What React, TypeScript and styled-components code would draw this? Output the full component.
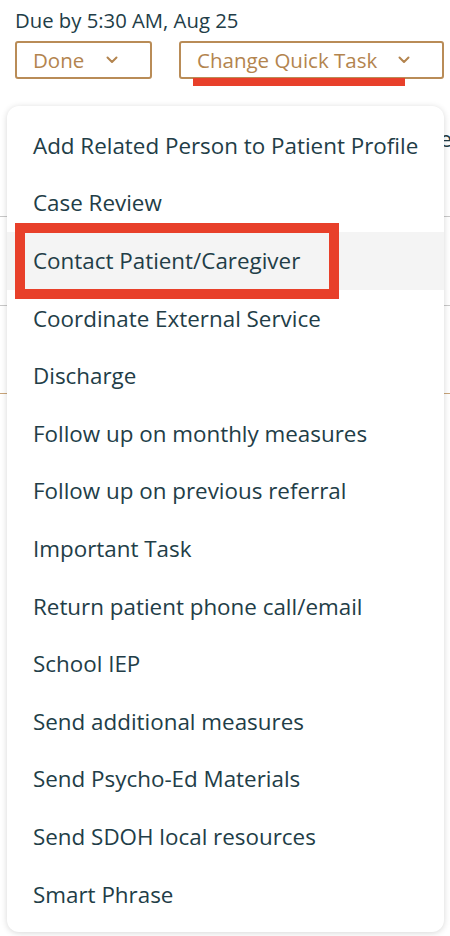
import styled, { createGlobalStyle } from 'styled-components';

const GlobalStyle = createGlobalStyle`
  body {
    margin: 0;
    background: #ffffff;
    font-family: 'Open Sans', 'Noto Sans', sans-serif;
  }
`;

const TASKS = [
  'Add Related Person to Patient Profile',
  'Case Review',
  'Contact Patient/Caregiver',
  'Coordinate External Service',
  'Discharge',
  'Follow up on monthly measures',
  'Follow up on previous referral',
  'Important Task',
  'Return patient phone call/email',
  'School IEP',
  'Send additional measures',
  'Send Psycho-Ed Materials',
  'Send SDOH local resources',
  'Smart Phrase',
];

const Chevron = () => (
  <svg width="12" height="8" viewBox="0 0 12 8" fill="none">
    <path d="M1.5 1.5 6 6l4.5-4.5" stroke="currentColor" strokeWidth="2" strokeLinecap="round" strokeLinejoin="round" />
  </svg>
);

const App = () => {
  return (
    <Page>
      <GlobalStyle />
      <DueText>Due by 5:30 AM, Aug 25</DueText>
      <ButtonRow>
        <SelectButton $width={137}>
          Done
          <Chevron />
        </SelectButton>
        <SelectButton $width={265} $marked>
          Change Quick Task
          <Chevron />
        </SelectButton>
      </ButtonRow>

      <Behind>
        <BehindRow $height={118} $line="#c8c8c8">
          <BehindText>Due date</BehindText>
        </BehindRow>
        <BehindRow $height={88} $line="#c8c8c8" />
        <BehindRow $height={87} $line="#c9a57a" />
      </Behind>

      <Menu>
        {TASKS.map(task => (
          <MenuItem key={task} $active={task === 'Contact Patient/Caregiver'}>
            {task}
          </MenuItem>
        ))}
      </Menu>
    </Page>
  );
};

export default App;

const Page = styled.div`
  position: relative;
  width: 450px;
  height: 936px;
  overflow: hidden;
  color: #223d47;
`;

const DueText = styled.div`
  padding: 7px 0 0 15px;
  font-size: 20.3px;
  line-height: 26px;
  color: #223d47;
`;

const ButtonRow = styled.div`
  display: flex;
  gap: 27px;
  padding: 8px 0 0 15px;
`;

const SelectButton = styled.button<{ $width: number; $marked?: boolean }>`
  position: relative;
  display: flex;
  align-items: center;
  justify-content: space-between;
  box-sizing: border-box;
  width: ${p => p.$width}px;
  height: 38px;
  padding: 0 32px 1px 16px;
  border: 2px solid #b98c57;
  border-radius: 3px;
  background: #ffffff;
  color: #b3844e;
  font-family: 'Open Sans', 'Noto Sans', sans-serif;
  font-size: 20.5px;

  ${p =>
    p.$marked &&
    `
    &::after {
      content: '';
      position: absolute;
      left: 12px;
      bottom: -9px;
      width: 212px;
      height: 8px;
      background: #e8402a;
    }
  `}
`;

const Behind = styled.div`
  display: flex;
  flex-direction: column;
  padding-top: 19px;
`;

const BehindRow = styled.div<{ $height: number; $line: string }>`
  height: ${p => p.$height}px;
  border-bottom: 1px solid ${p => p.$line};
`;

const BehindText = styled.div`
  padding-top: 25px;
  margin-right: -2px;
  text-align: right;
  font-size: 22.4px;
  color: #223d47;
`;

const Menu = styled.div`
  position: absolute;
  top: 106px;
  left: 7px;
  width: 437px;
  height: 826px;
  box-sizing: border-box;
  padding-top: 11px;
  border-radius: 12px;
  background: #ffffff;
  box-shadow: 0 1px 6px rgba(0, 0, 0, 0.16);
  display: flex;
  flex-direction: column;
`;

const MenuItem = styled.div<{ $active?: boolean }>`
  position: relative;
  display: flex;
  align-items: center;
  box-sizing: border-box;
  flex: none;
  height: 57.6px;
  padding: 0 0 1px 26px;
  font-size: 22.4px;
  color: #223d47;
  white-space: nowrap;
  background: ${p => (p.$active ? '#f4f4f4' : 'transparent')};

  ${p =>
    p.$active &&
    `
    &::after {
      content: '';
      position: absolute;
      left: 8px;
      top: -9px;
      width: 324px;
      height: 76px;
      box-sizing: border-box;
      border: 10px solid #e8402a;
    }
  `}
`;
